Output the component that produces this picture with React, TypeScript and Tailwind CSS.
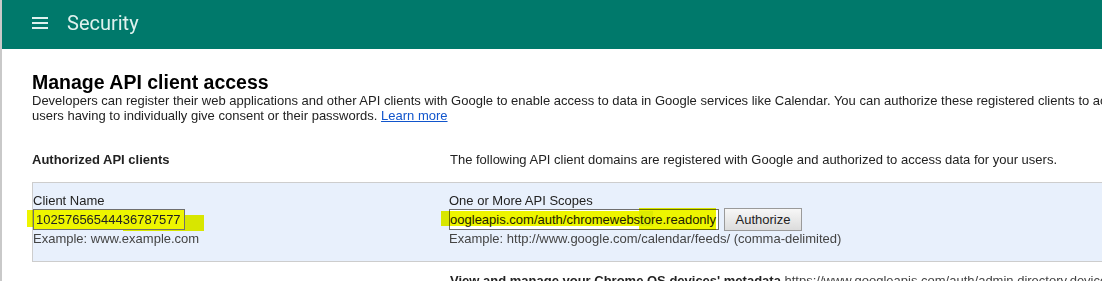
export default function App() {
  return (
    <div className="w-[1102px] h-[281px] overflow-hidden bg-white border-l-2 border-[#c9c9c9] font-['Liberation_Sans','Arial',sans-serif] text-[13px] leading-[15px] text-[#222]">
      {/* Top bar */}
      <header className="h-[49px] bg-[#00796b] flex items-center pl-[30px] pb-[3px]">
        <svg width="16" height="12" viewBox="0 0 16 12" className="fill-[#dff1ee]">
          <rect x="0" y="0" width="16" height="2" />
          <rect x="0" y="5" width="16" height="2" />
          <rect x="0" y="10" width="16" height="2" />
        </svg>
        <h1 className="ml-[19px] font-['Roboto',sans-serif] text-[20px] leading-[24px] text-[#dff1ee]">Security</h1>
      </header>

      <main className="w-[1500px] pl-[30px]">
        <h2 className="mt-[22px] text-[19.5px] leading-[22px] font-bold text-black">Manage API client access</h2>
        <p className="whitespace-nowrap">
          Developers can register their web applications and other API clients with Google to enable access to data in Google services like Calendar. You can authorize these registered clients to access your user data without your
          <br />
          users having to individually give consent or their passwords.{' '}
          <a href="#" className="text-[#1155cc] underline">Learn more</a>
        </p>

        {/* Column headings */}
        <div className="grid grid-cols-[418px_1fr] mt-[29px]">
          <div className="font-bold">Authorized API clients</div>
          <div>The following API client domains are registered with Google and authorized to access data for your users.</div>
        </div>

        {/* New client row */}
        <div className="mt-[15px] grid grid-cols-[416px_1fr] border-y border-l border-[#cdcdcd] bg-[#e8f0fc] pt-[10px] pb-[15px]">
          <div>
            <div>Client Name</div>
            <div className="relative h-[23px] flex items-center">
              <div className="absolute left-[-6px] top-[2px] w-[135px] h-[17px] bg-[#eef500] mix-blend-multiply" />
              <div className="absolute left-[90px] top-[7px] w-[81px] h-[16px] bg-[#eef500] mix-blend-multiply" />
              <div className="relative w-[152px] h-[21px] border border-[#6f6f6f] bg-[#eef500] pl-[2px] flex items-center whitespace-nowrap overflow-hidden">
                10257656544436787577
              </div>
            </div>
            <div className="text-[#444]">Example: www.example.com</div>
          </div>
          <div>
            <div>One or More API Scopes</div>
            <div className="relative h-[23px] flex items-center">
              <div className="relative w-[270px] h-[21px] border border-[#6f6f6f] bg-white px-[2px] flex items-center justify-end whitespace-nowrap overflow-hidden">
                <span className="shrink-0">https://www.googleapis.com/auth/chromewebstore.readonly</span>
              </div>
              <div className="absolute left-[-8px] top-[3px] w-[212px] h-[15px] bg-[#eef500] mix-blend-multiply" />
              <div className="absolute left-[190px] top-[0px] w-[77px] h-[22px] bg-[#eef500] mix-blend-multiply" />
              <button className="ml-[5px] w-[78px] h-[23px] border border-[#9a9a9a] bg-gradient-to-b from-[#f7f7f7] to-[#dcdcdc] text-[13px] text-[#222]">
                Authorize
              </button>
            </div>
            <div className="text-[#444]">Example: http://www.google.com/calendar/feeds/ (comma-delimited)</div>
          </div>
        </div>

        {/* Existing client rows */}
        <div className="grid grid-cols-[418px_1fr] mt-[11px]">
          <div />
          <div className="whitespace-nowrap">
            <span className="font-bold">View and manage your Chrome OS devices' metadata</span>{' '}
            <span className="text-[#444]">https://www.googleapis.com/auth/admin.directory.device.chromeos</span>
          </div>
        </div>
      </main>
    </div>
  )
}
